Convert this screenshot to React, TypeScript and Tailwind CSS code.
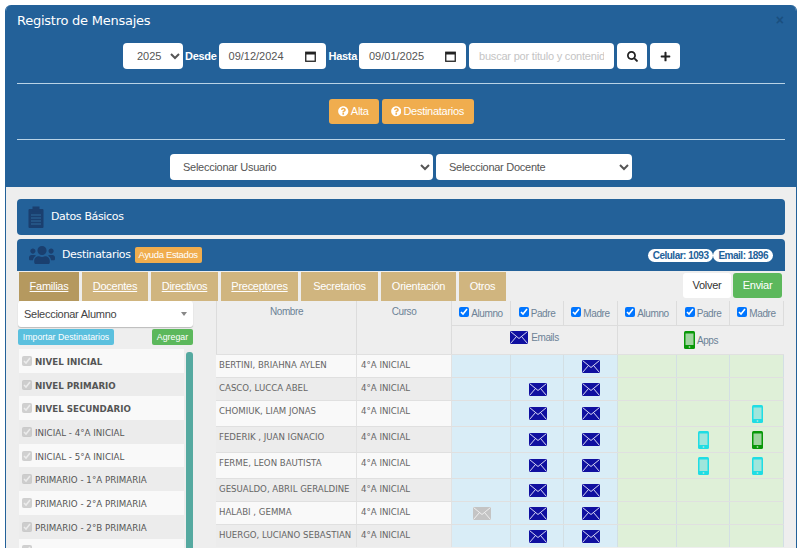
import { FaQuestionCircle, FaSearch, FaPlus, FaUsers } from 'react-icons/fa';

const tabs = ['Familias', 'Docentes', 'Directivos', 'Preceptores'];
const plainTabs = ['Secretarios', 'Orientación', 'Otros'];

const niveles = [
  { label: 'NIVEL INICIAL', bold: true },
  { label: 'NIVEL PRIMARIO', bold: true },
  { label: 'NIVEL SECUNDARIO', bold: true },
  { label: 'INICIAL - 4°A INICIAL' },
  { label: 'INICIAL - 5°A INICIAL' },
  { label: 'PRIMARIO - 1°A PRIMARIA' },
  { label: 'PRIMARIO - 2°A PRIMARIA' },
  { label: 'PRIMARIO - 2°B PRIMARIA' },
  { label: '' },
];

type Cell = '' | 'mail' | 'gray' | 'cyan' | 'green';

const alumnos: { nombre: string; alto: string; celdas: Cell[] }[] = [
  { nombre: 'BERTINI, BRIAHNA AYLEN', alto: 'h-[23px]', celdas: ['', '', 'mail', '', '', ''] },
  { nombre: 'CASCO, LUCCA ABEL', alto: 'h-[23px]', celdas: ['', 'mail', 'mail', '', '', ''] },
  { nombre: 'CHOMIUK, LIAM JONAS', alto: 'h-[26px]', celdas: ['', 'mail', 'mail', '', '', 'cyan'] },
  { nombre: 'FEDERIK , JUAN IGNACIO', alto: 'h-[26px]', celdas: ['', 'mail', 'mail', '', 'cyan', 'green'] },
  { nombre: 'FERME, LEON BAUTISTA', alto: 'h-[26px]', celdas: ['', 'mail', 'mail', '', 'cyan', 'cyan'] },
  { nombre: 'GESUALDO, ABRIL GERALDINE', alto: 'h-[23px]', celdas: ['', 'mail', 'mail', '', '', ''] },
  { nombre: 'HALABI , GEMMA', alto: 'h-[23px]', celdas: ['gray', 'mail', 'mail', '', '', ''] },
  { nombre: 'HUERGO, LUCIANO SEBASTIAN', alto: 'h-[23px]', celdas: ['', 'mail', 'mail', '', '', ''] },
];

const columnas = ['Alumno', 'Padre', 'Madre', 'Alumno', 'Padre', 'Madre'];

function Sobre({ gris = false }: { gris?: boolean }) {
  const fill = gris ? '#c4c4c4' : '#1010a0';
  const line = gris ? '#eeeeee' : '#d8d8f4';
  return (
    <svg width="18" height="13" viewBox="0 0 18 13" className="block">
      <rect width="18" height="13" fill={fill} />
      <path d="M0.5 0.5 L9 7.5 L17.5 0.5 M0.5 12.5 L6.5 5.5 M17.5 12.5 L11.5 5.5" stroke={line} strokeWidth="1" fill="none" />
    </svg>
  );
}

function Celular({ color, pantalla }: { color: string; pantalla: string }) {
  return (
    <svg width="11" height="18" viewBox="0 0 11 18" className="block">
      <rect width="11" height="18" rx="1.5" fill={color} />
      <rect x="1.5" y="2.5" width="8" height="11.5" fill={pantalla} />
      <circle cx="5.5" cy="16" r="0.9" fill={pantalla} />
    </svg>
  );
}

function Calendario() {
  return (
    <svg width="11" height="11" viewBox="0 0 11 11" className="block">
      <rect x="0.75" y="1.25" width="9.5" height="9" fill="none" stroke="#222" strokeWidth="1.3" />
      <rect x="0.75" y="1" width="9.5" height="2.5" fill="#222" />
    </svg>
  );
}

function Fecha({ value, ancho }: { value: string; ancho: string }) {
  return (
    <div className={`${ancho} h-[26px] bg-white rounded-[4px] flex items-center justify-between pl-[10px] pr-[10px] text-[11px] text-[#555]`}>
      <span>{value}</span>
      <Calendario />
    </div>
  );
}

function Marca({ gris = false }: { gris?: boolean }) {
  return (
    <input
      type="checkbox"
      checked
      readOnly
      disabled={gris}
      className="w-[10px] h-[10px] m-0 mb-[3px] shrink-0"
    />
  );
}

export default function App() {
  return (
    <div className="w-[800px] h-[548px] overflow-hidden bg-white font-['Liberation_Sans',sans-serif] pt-[5px] pl-[5px]">
      <div className="w-[792px] h-[543px] overflow-hidden rounded-t-[6px] border-x border-[#236199] bg-[#eeeeee]">
        {/* Cabecera */}
        <div className="h-[182px] bg-[#236199] px-[11px] flex flex-col">
          <div className="flex items-center justify-between h-[30px] pt-[1px]">
            <h4 className="font-['DejaVu_Sans',sans-serif] text-[13px] tracking-[-0.25px] text-white">Registro de Mensajes</h4>
            <span className="text-[#1a4f80] text-[14px] font-bold pr-[1px]">×</span>
          </div>
          <div className="flex items-center h-[26px] mt-[8px] pl-[106px]">
            <select className="w-[60px] h-[26px] bg-white rounded-[4px] text-[11px] text-[#555] pl-[10px]">
              <option>2025</option>
            </select>
            <span className="text-white text-[11px] tracking-[-0.3px] font-bold ml-[2px] mr-[2px]">Desde</span>
            <Fecha value="09/12/2024" ancho="w-[107px]" />
            <span className="text-white text-[11px] tracking-[-0.3px] font-bold ml-[3px] mr-[2px]">Hasta</span>
            <Fecha value="09/01/2025" ancho="w-[107px]" />
            <input
              placeholder="buscar por titulo y contenido"
              className="ml-[3px] w-[145px] h-[26px] bg-white rounded-[4px] px-[10px] text-[11px] tracking-[-0.2px] placeholder:text-[#c4c4c4]"
            />
            <button className="ml-[3px] w-[30px] h-[26px] bg-white rounded-[4px] flex items-center justify-center">
              <FaSearch className="text-[11px] text-[#222]" />
            </button>
            <button className="ml-[3px] w-[30px] h-[26px] bg-white rounded-[4px] flex items-center justify-center">
              <FaPlus className="text-[11px] text-[#222]" />
            </button>
          </div>
          <div className="mt-[14px] border-t border-[#b9d3e6]" />
          <div className="flex justify-center gap-[3px] mt-[15px]">
            <button className="w-[50px] h-[25px] rounded-[3px] bg-[#f0ad4e] text-white text-[11px] tracking-[-0.27px] flex items-center justify-center gap-[2px]">
              <FaQuestionCircle className="text-[10.5px]" /> Alta
            </button>
            <button className="w-[92px] h-[25px] rounded-[3px] bg-[#f0ad4e] text-white text-[11px] tracking-[-0.27px] flex items-center justify-center gap-[2px]">
              <FaQuestionCircle className="text-[10.5px]" /> Destinatarios
            </button>
          </div>
          <div className="mt-[15px] border-t border-[#b9d3e6]" />
          <div className="flex gap-[3px] mt-[14px] pl-[153px]">
            <select className="w-[263px] h-[26px] bg-white rounded-[4px] text-[11px] tracking-[-0.27px] text-[#555] pl-[9px]">
              <option>Seleccionar Usuario</option>
            </select>
            <select className="w-[196px] h-[26px] bg-white rounded-[4px] text-[11px] tracking-[-0.27px] text-[#555] pl-[9px]">
              <option>Seleccionar Docente</option>
            </select>
          </div>
        </div>

        <div className="px-[11px] pt-[12px]">
          {/* Datos básicos */}
          <div className="h-[36px] bg-[#236199] rounded-[4px] flex items-center pl-[11px]">
            <svg width="16" height="22" viewBox="0 0 16 22" className="block">
              <rect x="0.5" y="3" width="15" height="19" rx="1" fill="#1a3f6f" />
              <rect x="4.5" y="0.5" width="7" height="5" fill="#1a3f6f" />
              <path d="M3 9h10M3 12h10M3 15h10M3 18h10" stroke="#2f6a9c" strokeWidth="1" />
            </svg>
            <span className="ml-[7px] font-['DejaVu_Sans',sans-serif] text-[11px] tracking-[-0.35px] text-white">Datos Básicos</span>
          </div>

          {/* Destinatarios */}
          <div className="mt-[4px] bg-[#eeeeee]">
            <div className="h-[32px] bg-[#236199] rounded-t-[4px] flex items-center pl-[12px] pr-[12px]">
              <FaUsers className="text-[#1a3f6f] text-[26px]" />
              <span className="ml-[7px] font-['DejaVu_Sans',sans-serif] text-[11px] tracking-[-0.35px] text-white">Destinatarios</span>
              <span className="ml-[4px] h-[16px] px-[4px] rounded-[2px] bg-[#f0ad4e] text-white text-[9.5px] tracking-[-0.35px] leading-[16px]">Ayuda Estados</span>
              <div className="ml-auto flex">
                <span className="h-[13px] px-[5px] rounded-full bg-white text-[#236199] text-[10px] tracking-[-0.5px] font-bold leading-[13px]">Celular: 1093</span>
                <span className="h-[13px] px-[5px] rounded-full bg-white text-[#236199] text-[10px] tracking-[-0.5px] font-bold leading-[13px]">Email: 1896</span>
              </div>
            </div>

            <div className="flex items-start h-[30px] pl-[2px] pr-[3px] pt-[1px]">
              {tabs.map((t, i) => (
                <a
                  key={t}
                  className={`h-[29px] mr-[3px] flex items-center justify-center text-[11px] tracking-[-0.27px] text-white underline ${i === 0 ? 'bg-[#b5995f] w-[60px]' : 'bg-[#d0b57f]'} ${i === 1 ? 'w-[66px]' : ''} ${i === 2 ? 'w-[67px]' : ''} ${i === 3 ? 'w-[77px]' : ''}`}
                >
                  {t}
                </a>
              ))}
              {plainTabs.map((t, i) => (
                <span
                  key={t}
                  className={`h-[29px] mr-[3px] flex items-center justify-center text-[11px] tracking-[-0.27px] text-white bg-[#d0b57f] ${i === 0 ? 'w-[77px]' : ''} ${i === 1 ? 'w-[75px]' : ''} ${i === 2 ? 'w-[47px]' : ''}`}
                >
                  {t}
                </span>
              ))}
              <button className="ml-auto mt-[1px] w-[48px] h-[25px] bg-white rounded-[3px] text-[11px] tracking-[-0.27px] text-[#333]">Volver</button>
              <button className="ml-[2px] mt-[1px] w-[49px] h-[25px] bg-[#5cb85c] rounded-[3px] text-[11px] tracking-[-0.27px] text-white">Enviar</button>
            </div>

            <div className="flex">
              {/* Columna izquierda */}
              <div className="w-[199px] shrink-0">
                <div className="ml-[1px] w-[175px] h-[26px] bg-white rounded-[3px] shadow-[0_1px_1px_#bbb] flex items-center justify-between pl-[6px] pr-[6px] text-[11px] tracking-[-0.27px] text-[#444]">
                  <span>Seleccionar Alumno</span>
                  <span className="w-0 h-0 border-x-[3px] border-x-transparent border-t-[4px] border-t-[#888]" />
                </div>
                <div className="flex justify-between items-center ml-[1px] w-[175px] mt-[1px] h-[17px]">
                  <span className="h-[16px] w-[96px] rounded-[2px] bg-[#5bc0de] text-white text-[8.8px] leading-[16px] text-center">Importar Destinatarios</span>
                  <span className="h-[16px] w-[41px] rounded-[2px] bg-[#5cb85c] text-white text-[8.8px] leading-[16px] text-center">Agregar</span>
                </div>
                <div className="flex ml-[2px] mt-[4px]">
                  <div className="w-[165px]">
                    {niveles.map((n, i) => (
                      <div
                        key={i}
                        className={`h-[23.7px] flex items-center gap-[3px] pl-[3px] pt-[3px] font-['DejaVu_Sans',sans-serif] text-[8.7px] text-[#555] ${n.bold ? 'font-bold' : ''} ${i % 2 === 0 ? 'bg-[#f9f9f9]' : 'bg-[#ececec]'}`}
                      >
                        <Marca gris />
                        {n.label}
                      </div>
                    ))}
                  </div>
                  <div className="ml-[2px] mt-[3px] w-[7px] h-[230px] rounded-t-[3px] bg-[#55a9a0]" />
                </div>
              </div>

              {/* Tabla */}
              <div className="w-[568px]">
                <div className="grid grid-cols-[141px_95px_59px_53px_54px_59px_53px_54px] grid-rows-[25px_28px] text-[10px] tracking-[-0.4px] text-[#6c8296]">
                  <div className="row-span-2 border-x border-[#dcdcdc] text-center pt-[3px]">Nombre</div>
                  <div className="row-span-2 border-r border-[#dcdcdc] text-center pt-[3px]">Curso</div>
                  {columnas.map((c, i) => (
                    <div key={i} className="border-r border-b border-[#dcdcdc] flex items-center justify-center gap-[2px] pt-[1px]">
                      <Marca />
                      {c}
                    </div>
                  ))}
                  <div className="col-span-3 border-r border-[#dcdcdc] flex items-start justify-center gap-[3px] pt-[4px]">
                    <span className="mt-[1px]"><Sobre /></span>
                    Emails
                  </div>
                  <div className="col-span-3 flex items-center justify-center gap-[2px]">
                    <Celular color="#089808" pantalla="#9fd49f" />
                    Apps
                  </div>
                </div>
                {alumnos.map((a, i) => (
                  <div
                    key={a.nombre}
                    className={`grid grid-cols-[141px_95px_59px_53px_54px_59px_53px_54px] ${a.alto} border-t border-[#e0e0e0] font-['DejaVu_Sans',sans-serif] text-[8.6px] text-[#666]`}
                  >
                    <div className={`pl-[3px] pt-[4px] whitespace-nowrap border-r border-[#e2e2e2] ${i % 2 === 0 ? 'bg-[#f9f9f9]' : 'bg-[#ececec]'}`}>{a.nombre}</div>
                    <div className={`pl-[4px] pt-[4px] whitespace-nowrap border-r border-[#e2e2e2] ${i % 2 === 0 ? 'bg-[#f9f9f9]' : 'bg-[#ececec]'}`}>4°A INICIAL</div>
                    {a.celdas.map((c, j) => (
                      <div
                        key={j}
                        className={`flex items-center justify-center pl-[1px] border-r border-[#d3dfe4] ${j < 3 ? 'bg-[#d9edf7]' : 'bg-[#dff0d8]'}`}
                      >
                        {c === 'mail' && <Sobre />}
                        {c === 'gray' && <Sobre gris />}
                        {c === 'cyan' && <Celular color="#1fdde4" pantalla="#9fe6dc" />}
                        {c === 'green' && <Celular color="#089808" pantalla="#9fd49f" />}
                      </div>
                    ))}
                  </div>
                ))}
              </div>
            </div>
          </div>
        </div>
      </div>
    </div>
  );
}
